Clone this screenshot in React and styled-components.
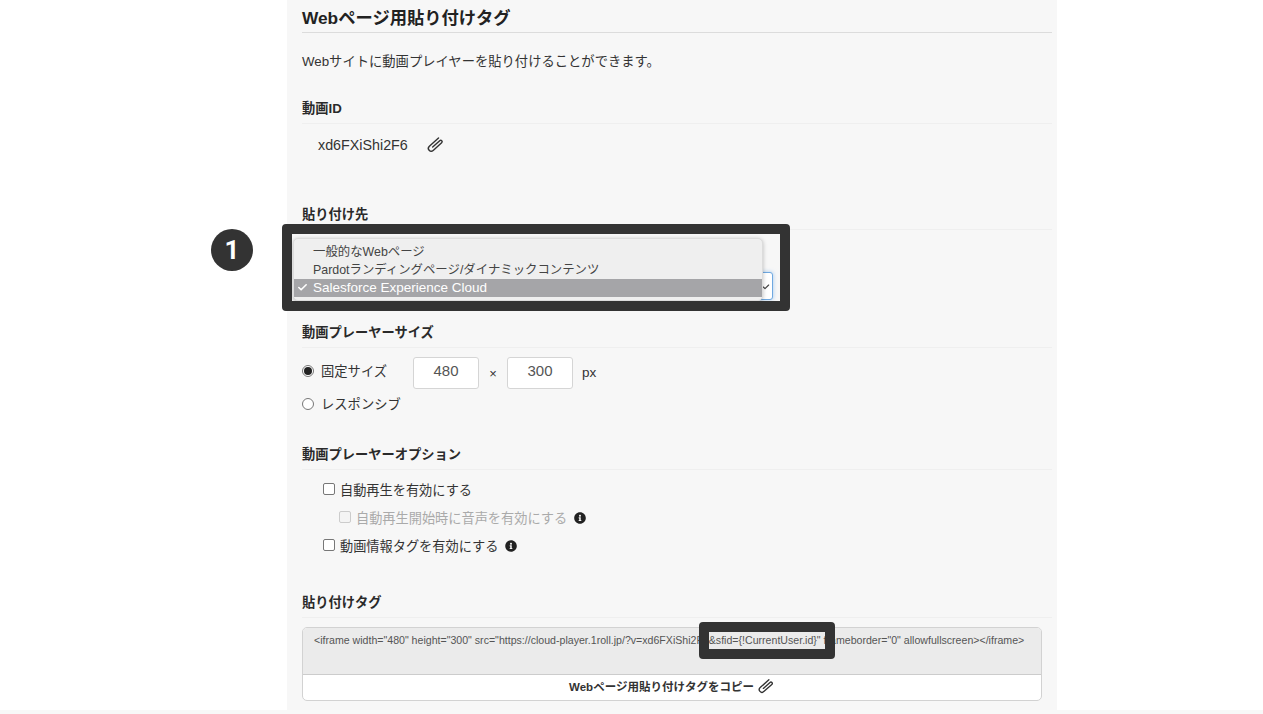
import React from "react";
import styled, { createGlobalStyle } from "styled-components";
import { Check } from "lucide-react";
import { FaInfoCircle } from "react-icons/fa";

const Global = createGlobalStyle`
  html, body { margin: 0; padding: 0; background: #fff; height: 714px; overflow: hidden; }
  * { box-sizing: border-box; }
  body { font-family: "Liberation Sans", "Noto Sans CJK JP", sans-serif; color: #333; }
`;
const Page = styled.div`
  height: 714px;
  display: flex;
  flex-direction: column;
  overflow: hidden;
`;
const Main = styled.div`
  flex: 1;
  min-height: 0;
  padding-left: 287px;
`;
const FooterBand = styled.div`
  height: 4px;
  background: #f8f8f8;
`;
const Panel = styled.section`
  position: relative;
  width: 770px;
  height: 710px;
  padding: 0 5px 0 15px;
  background: #f7f7f7;
`;
const Title = styled.h1`
  margin: 0;
  height: 33px;
  padding-top: 6px;
  font-size: 17.3px;
  line-height: 25px;
  font-weight: 700;
  color: #222;
  border-bottom: 1px solid #dcdcdc;
`;
const Lead = styled.p`
  margin: 0;
  padding-top: 19px;
  height: 66px;
  font-size: 13.3px;
  line-height: 20px;
  color: #333;
`;
const Heading = styled.h2`
  margin: 0;
  height: 25px;
  font-size: 13.25px;
  line-height: 19px;
  font-weight: 700;
  color: #2a2a2a;
  border-bottom: 1px solid #efefef;
`;
const IdRow = styled.div`
  display: flex;
  align-items: center;
  gap: 18px;
  height: 81px;
  padding: 0 0 40px 16px;
  font-size: 14.3px;
  color: #333;
`;
const SelectRow = styled.div`
  position: relative;
  height: 93px;
`;
const SelectBox = styled.div`
  position: absolute;
  left: 0;
  top: 42px;
  width: 471px;
  height: 28px;
  background: #fff;
  border: 1px solid #6fa8e0;
  border-radius: 3px;
  box-shadow: 0 0 4px rgba(110, 170, 230, 0.6);
`;
const SelectCaret = styled.span`
  position: absolute;
  right: 2px;
  top: 10px;
  color: #444;
  display: flex;
`;
const Frame = styled.div`
  position: absolute;
  left: -20px;
  top: -6px;
  width: 508px;
  height: 87px;
  border: 10px solid #333;
  border-radius: 4px;
`;
const Menu = styled.div`
  position: absolute;
  left: -9px;
  top: 8px;
  width: 470px;
  height: 63px;
  padding-top: 4px;
  background: #efefef;
  border: 1px solid #dcdcdc;
  border-radius: 5px;
  box-shadow: 0 1px 4px rgba(0, 0, 0, 0.25);
`;
const MenuItem = styled.div`
  display: flex;
  align-items: center;
  height: 18px;
  padding-left: 19px;
  padding-bottom: 2px;
  position: relative;
  font-size: ${(p) => (p.$selected ? "13.5px" : "12.4px")};
  color: ${(p) => (p.$selected ? "#fff" : "#444")};
  background: ${(p) => (p.$selected ? "#a5a5a8" : "transparent")};
`;
const Tick = styled.span`
  position: absolute;
  left: 3px;
  top: 3px;
  display: flex;
  color: #fff;
`;
const Badge = styled.div`
  position: absolute;
  left: -91px;
  top: -1px;
  width: 42px;
  height: 42px;
  border-radius: 50%;
  background: #333;
  color: #fff;
  display: flex;
  align-items: center;
  justify-content: center;
  font-family: Roboto, sans-serif;
  font-size: 26px;
  font-weight: 700;
`;
const SizeRow = styled.div`
  display: flex;
  align-items: center;
  height: 32px;
  margin-top: 9px;
`;
const SizeChoice = styled.div`
  display: flex;
  align-items: center;
  margin-bottom: 4px;
`;
const Radio = styled.span`
  width: 12px;
  height: 12px;
  flex: none;
  border-radius: 50%;
  border: 1px solid #777;
  background: #fff;
  display: flex;
  align-items: center;
  justify-content: center;
  margin-right: 7px;
  &::after {
    content: "";
    display: ${(p) => (p.$on ? "block" : "none")};
    width: 8px;
    height: 8px;
    border-radius: 50%;
    background: #222;
  }
`;
const RadioLabel = styled.span`
  font-size: 13.3px;
  line-height: 18px;
  padding-top: 2px;
  color: #333;
  width: 92px;
  white-space: nowrap;
`;
const NumberBox = styled.div`
  width: 66px;
  height: 32px;
  padding-bottom: 5px;
  background: #fff;
  border: 1px solid #d5d5d5;
  border-radius: 3px;
  display: flex;
  align-items: center;
  justify-content: center;
  font-size: 15px;
  color: #555;
`;
const Times = styled.span`
  width: 28px;
  text-align: center;
  font-size: 13px;
  color: #333;
`;
const Unit = styled.span`
  margin-left: 9px;
  margin-bottom: 2px;
  font-size: 13.5px;
  color: #333;
`;
const ResponsiveRow = styled.div`
  display: flex;
  align-items: center;
  height: 20px;
  margin-top: 5px;
  margin-bottom: 31px;
`;
const OptionList = styled.div`
  display: flex;
  flex-direction: column;
  height: 123px;
  padding-top: 5px;
`;
const OptionRow = styled.div`
  display: flex;
  align-items: center;
  height: 28px;
  padding-left: ${(p) => (p.$nested ? "37px" : "21px")};
  font-size: 13.2px;
  color: ${(p) => (p.$disabled ? "#aaa" : "#333")};
`;
const Box = styled.span`
  width: 12px;
  height: 12px;
  flex: none;
  margin-right: 5px;
  background: ${(p) => (p.$disabled ? "#f4f4f4" : "#fff")};
  border: 1px solid ${(p) => (p.$disabled ? "#ccc" : "#777")};
  border-radius: 2px;
`;
const Info = styled.span`
  display: inline-flex;
  margin-left: 7px;
  margin-top: 2px;
  color: #222;
  font-size: 12px;
`;
const TagBox = styled.div`
  margin-top: 9px;
  width: 740px;
  height: 74px;
  border: 1px solid #d2d2d2;
  border-radius: 5px;
  overflow: hidden;
  background: #fff;
`;
const TagText = styled.div`
  height: 47px;
  padding: 5px 11px;
  background: #ebebeb;
  border-bottom: 1px solid #ccc;
  font-size: 10.6px;
  line-height: 15px;
  color: #555;
  white-space: nowrap;
`;
const CopyButton = styled.div`
  height: 25px;
  padding-bottom: 4px;
  display: flex;
  align-items: center;
  justify-content: center;
  gap: 3px;
  font-size: 11.5px;
  font-weight: 700;
  color: #333;
`;
const TagFrame = styled.div`
  position: absolute;
  left: 412px;
  top: 622px;
  width: 136px;
  height: 37px;
  border: 10px solid #333;
  border-radius: 4px;
`;
const ClipSvg = styled.svg`
  flex: none;
  fill: none;
  stroke: #333;
  stroke-width: 1.5;
  stroke-linecap: round;
`;

const ClipIcon = ({ size }) => (
  <ClipSvg width={size} height={size} viewBox="0 0 20 20">
    <path
      transform="rotate(-42 10 10)"
      d="M17 7 H4 A3 3 0 0 0 4 13 H16 A1.5 1.5 0 0 0 16 10 H6"
    />
  </ClipSvg>
);

export default function App() {
  return (
    <Page>
      <Global />
      <Main>
        <Panel>
          <Title>Webページ用貼り付けタグ</Title>
          <Lead>Webサイトに動画プレイヤーを貼り付けることができます。</Lead>
          <Heading>動画ID</Heading>
          <IdRow>
            xd6FXiShi2F6
            <ClipIcon size={19} />
          </IdRow>
          <Heading>貼り付け先</Heading>
          <SelectRow>
            <SelectBox>
              <SelectCaret>
                <Check size={8} strokeWidth={3.5} />
              </SelectCaret>
            </SelectBox>
            <Menu>
              <MenuItem>一般的なWebページ</MenuItem>
              <MenuItem>Pardotランディングページ/ダイナミックコンテンツ</MenuItem>
              <MenuItem $selected>
                <Tick>
                  <Check size={11} strokeWidth={3.5} />
                </Tick>
                Salesforce Experience Cloud
              </MenuItem>
            </Menu>
            <Frame />
            <Badge>1</Badge>
          </SelectRow>
          <Heading>動画プレーヤーサイズ</Heading>
          <SizeRow>
            <SizeChoice>
              <Radio $on />
              <RadioLabel>固定サイズ</RadioLabel>
            </SizeChoice>
            <NumberBox>480</NumberBox>
            <Times>×</Times>
            <NumberBox>300</NumberBox>
            <Unit>px</Unit>
          </SizeRow>
          <ResponsiveRow>
            <Radio />
            <RadioLabel>レスポンシブ</RadioLabel>
          </ResponsiveRow>
          <Heading>動画プレーヤーオプション</Heading>
          <OptionList>
            <OptionRow>
              <Box />
              自動再生を有効にする
            </OptionRow>
            <OptionRow $nested $disabled>
              <Box $disabled />
              自動再生開始時に音声を有効にする
              <Info>
                <FaInfoCircle />
              </Info>
            </OptionRow>
            <OptionRow>
              <Box />
              動画情報タグを有効にする
              <Info>
                <FaInfoCircle />
              </Info>
            </OptionRow>
          </OptionList>
          <Heading>貼り付けタグ</Heading>
          <TagBox>
            <TagText>
              {'<iframe width="480" height="300" src="https://cloud-player.1roll.jp/?v=xd6FXiShi2F6&sfid={!CurrentUser.id}" frameborder="0" allowfullscreen></iframe>'}
            </TagText>
            <CopyButton>
              Webページ用貼り付けタグをコピー
              <ClipIcon size={18} />
            </CopyButton>
          </TagBox>
          <TagFrame />
        </Panel>
      </Main>
      <FooterBand />
    </Page>
  );
}
